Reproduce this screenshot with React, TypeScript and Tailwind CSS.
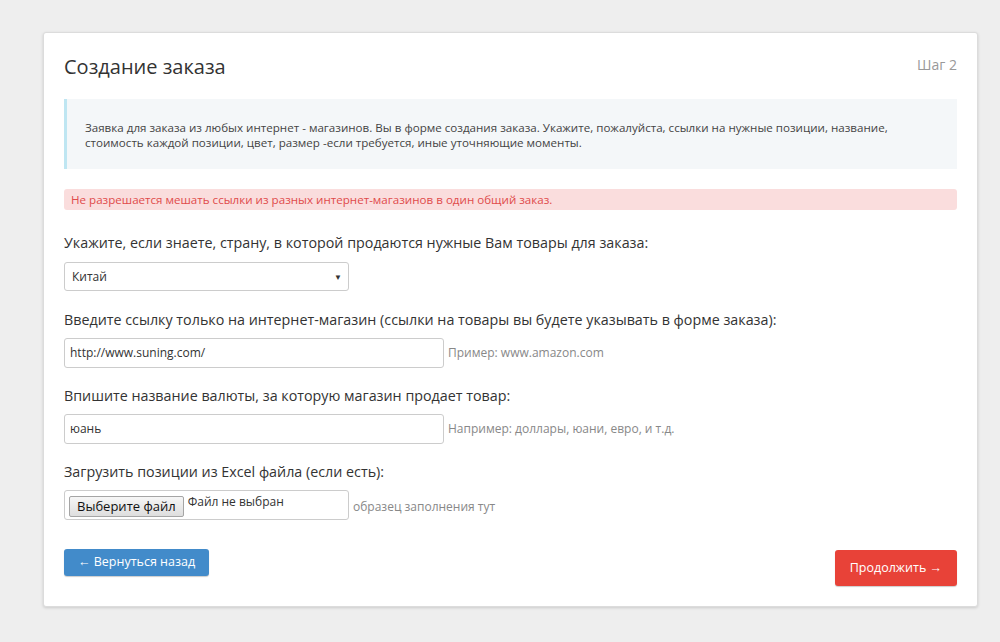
const font = { fontFamily: '"Open Sans", "Liberation Sans", sans-serif' };

const App = () => {
  return (
    <div className="min-h-[642px] w-full bg-[#eeeeee] pt-[32px]" style={font}>
      <div className="ml-[43px] w-[935px] rounded-[3px] border border-[#dcdcdc] bg-white px-5 pb-5 pt-[20px] shadow-[0_1px_3px_rgba(0,0,0,0.15)]">
        <div className="flex items-start justify-between">
          <h1 className="text-[20px] leading-[28px] text-[#333]">Создание заказа</h1>
          <span className="mt-[2px] text-[14px] leading-[20px] text-[#999]">Шаг 2</span>
        </div>

        <div className="mt-[18px] h-[70px] border-l-[3px] border-[#bfe6f2] bg-[#f4f7f9] pl-[18px] pt-[21px] text-[11.6px] leading-[15px] text-[#444]">
          Заявка для заказа из любых интернет - магазинов. Вы в форме создания заказа. Укажите, пожалуйста, ссылки на нужные позиции, название,
          <br />
          стоимость каждой позиции, цвет, размер -если требуется, иные уточняющие моменты.
        </div>

        <div className="mt-5 h-[21px] rounded-[3px] bg-[#fadddd] pl-[7px] text-[11.6px] leading-[21px] text-[#e04b4b]">
          Не разрешается мешать ссылки из разных интернет-магазинов в один общий заказ.
        </div>

        <div className="mt-[23px] text-[14.3px] leading-[20px] text-[#333]">
          Укажите, если знаете, страну, в которой продаются нужные Вам товары для заказа:
        </div>
        <div className="mt-[9px] flex h-[29px] w-[285px] items-center justify-between rounded-[3px] border border-[#cccccc] pl-[7px] pr-[6px] text-[12px] text-[#333]">
          <span>Китай</span>
          <span className="text-[8px] text-[#333]">▼</span>
        </div>

        <div className="mt-[19px] text-[14.3px] leading-[20px] text-[#333]">
          Введите ссылку только на интернет-магазин (ссылки на товары вы будете указывать в форме заказа):
        </div>
        <div className="mt-[8px] flex items-center">
          <div className="flex h-[30px] w-[380px] items-center rounded-[3px] border border-[#cccccc] pl-[5px] text-[12px] text-[#333]">
            http://www.suning.com/
          </div>
          <span className="ml-[4px] text-[12px] text-[#888]">Пример: www.amazon.com</span>
        </div>

        <div className="mt-[18px] text-[14.3px] leading-[20px] text-[#333]">
          Впишите название валюты, за которую магазин продает товар:
        </div>
        <div className="mt-[8px] flex items-center">
          <div className="flex h-[30px] w-[380px] items-center rounded-[3px] border border-[#cccccc] pl-[5px] text-[12px] text-[#333]">
            юань
          </div>
          <span className="ml-[4px] text-[12px] text-[#888]">Например: доллары, юани, евро, и т.д.</span>
        </div>

        <div className="mt-[18px] text-[14.3px] leading-[20px] text-[#333]">
          Загрузить позиции из Excel файла (если есть):
        </div>
        <div className="mt-[8px] flex items-center">
          <div className="flex h-[30px] w-[285px] items-start rounded-[3px] border border-[#cccccc] pl-[4px] pt-[5px]">
            <span className="h-[21px] rounded-[2px] border border-[#a5a5a5] bg-gradient-to-b from-[#f6f6f6] to-[#dedede] px-[7px] text-[13px] leading-[19px] text-[#111]">
              Выберите файл
            </span>
            <span className="ml-[4px] text-[12px] leading-[12px] text-[#333]">Файл не выбран</span>
          </div>
          <span className="ml-[4px] mt-[4px] text-[12px] text-[#888]">образец заполнения тут</span>
        </div>

        <div className="mt-[29px] flex items-start justify-between">
          <button className="h-[27px] rounded-[3px] bg-[#428bca] px-[14px] text-[12.5px] text-white shadow-[0_1px_1px_rgba(0,0,0,0.2)]">
            ← Вернуться назад
          </button>
          <button className="mt-[1px] h-[36px] rounded-[3px] bg-[#e84238] px-[15px] text-[12.5px] text-white shadow-[0_1px_1px_rgba(0,0,0,0.2)]">
            Продолжить →
          </button>
        </div>
      </div>
    </div>
  );
};

export default App;
